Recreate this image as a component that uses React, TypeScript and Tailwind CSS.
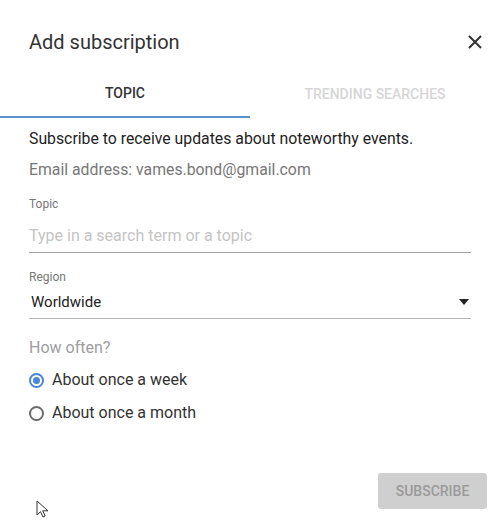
const font = { fontFamily: "Roboto, 'Liberation Sans', sans-serif" };

const Radio = ({ checked, label }: { checked: boolean; label: string }) => (
  <label className="flex items-center h-6 cursor-pointer">
    <span
      className={
        checked
          ? "w-[15px] h-[15px] rounded-full border-2 border-[#4a85d6] flex items-center justify-center"
          : "w-[15px] h-[15px] rounded-full border-2 border-[#6b6b6b] flex items-center justify-center"
      }
    >
      {checked && <span className="w-[7px] h-[7px] rounded-full bg-[#4a85d6]" />}
    </span>
    <span className="ml-[8px] text-[16px] text-[#333]">{label}</span>
  </label>
);

export default function App() {
  return (
    <div className="w-[500px] h-[521px] bg-white relative overflow-hidden" style={font}>
      {/* Header */}
      <div className="flex items-center justify-between pt-[28px] pl-[29px] pr-[18px]">
        <h1 className="text-[20px] leading-7 text-[#333]">Add subscription</h1>
        <svg className="w-[14px] h-[14px] text-[#333]" viewBox="0 0 14 14" fill="none" stroke="currentColor" strokeWidth={2}>
          <path d="M1 1l12 12M13 1L1 13" />
        </svg>
      </div>

      {/* Tabs */}
      <div className="flex mt-[14px]">
        <div className="w-1/2 h-12 flex items-center justify-center border-b-2 border-[#5a8fd0] text-[14px] font-medium text-[#333]">
          TOPIC
        </div>
        <div className="w-1/2 h-12 flex items-center justify-center text-[14px] font-medium text-[#d6d6d6]">
          TRENDING SEARCHES
        </div>
      </div>

      {/* Body */}
      <div className="px-[29px]">
        <p className="mt-[9px] text-[15.8px] leading-6 text-[#222]">Subscribe to receive updates about noteworthy events.</p>
        <p className="mt-[7px] text-[15.8px] leading-6 text-[#777]">Email address: vames.bond@gmail.com</p>

        <div className="mt-[14px] text-[12px] leading-4 text-[#777]">Topic</div>
        <div className="mt-3 pb-1 border-b border-[#9e9e9e]">
          <input
            className="w-full text-[16px] leading-6 outline-none placeholder:text-[#c4c4c4]"
            placeholder="Type in a search term or a topic"
          />
        </div>

        <div className="mt-4 text-[12px] leading-4 text-[#777]">Region</div>
        <div className="mt-[5px] pb-1 border-b border-[#b5b5b5] flex items-center justify-between">
          <span className="text-[15px] leading-6 text-[#222] ml-[2px]">Worldwide</span>
          <svg className="w-[10px] h-[6px] mr-[2px]" viewBox="0 0 10 6">
            <path d="M0 0h10L5 6z" fill="#222" />
          </svg>
        </div>

        <div className="mt-[17px] text-[16px] leading-6 text-[#9e9e9e]">How often?</div>
        <div className="mt-2">
          <Radio checked label="About once a week" />
        </div>
        <div className="mt-[9px]">
          <Radio checked={false} label="About once a month" />
        </div>
      </div>

      {/* Footer */}
      <div className="flex justify-end pr-[13px] mt-[48px]">
        <button className="w-[109px] h-9 rounded-[3px] bg-[#cfcfcf] text-[14px] font-medium text-[#9a9a9a]">
          SUBSCRIBE
        </button>
      </div>

      {/* Mouse pointer */}
      <svg className="absolute left-[36px] top-[500px] w-[13px] h-[18px]" viewBox="0 0 13 18">
        <path d="M1 1v14l3.5-3.3 2.5 5.3 2.2-1-2.5-5.2H12z" fill="#fff" stroke="#333" strokeWidth={1} strokeLinejoin="round" />
      </svg>
    </div>
  );
}
